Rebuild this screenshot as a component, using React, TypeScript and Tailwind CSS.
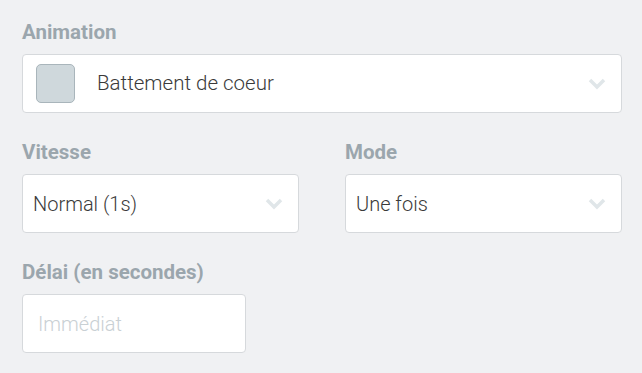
function Chevron() {
  return (
    <svg width="18" height="12" viewBox="0 0 18 12" className="shrink-0">
      <path d="M2 2 L9 9 L16 2" fill="none" stroke="#e0e6e9" strokeWidth="3.5" />
    </svg>
  );
}

function Label({ children }: { children: React.ReactNode }) {
  return (
    <div className="text-[20.5px] font-bold text-[#9ba6ad] leading-[24px] mb-[10px]">
      {children}
    </div>
  );
}

function Select({ value }: { value: string }) {
  return (
    <div className="h-[59px] bg-white border border-[#d6d9dc] rounded-[4px] flex items-center justify-between pl-[10px] pr-[15px]">
      <span className="text-[20px] font-light text-[#3a3a3a]">{value}</span>
      <Chevron />
    </div>
  );
}

export default function App() {
  return (
    <div
      className="w-[642px] h-[373px] bg-[#f0f1f3] pt-[20px] px-[22px]"
      style={{ fontFamily: 'Roboto, "Liberation Sans", sans-serif' }}
    >
      <div className="w-[600px]">
        <Label>Animation</Label>
        <div className="h-[59px] bg-white border border-[#d6d9dc] rounded-[4px] flex items-center justify-between pl-[13px] pr-[15px]">
          <div className="flex items-center gap-[22px]">
            <div className="w-[39px] h-[39px] rounded-[5px] bg-[#cfd8dc] border border-[#a9b5bb]" />
            <span className="text-[20.5px] font-light text-[#3a3a3a]">Battement de coeur</span>
          </div>
          <Chevron />
        </div>

        <div className="grid grid-cols-2 gap-[46px] mt-[27px]">
          <div>
            <Label>Vitesse</Label>
            <Select value="Normal (1s)" />
          </div>
          <div>
            <Label>Mode</Label>
            <Select value="Une fois" />
          </div>
        </div>

        <div className="mt-[27px]">
          <Label>Délai (en secondes)</Label>
          <div className="w-[224px] h-[59px] bg-white border border-[#d6d9dc] rounded-[4px] flex items-center px-[15px]">
            <span className="text-[20px] font-light text-[#c9d0d4]">Immédiat</span>
          </div>
        </div>
      </div>
    </div>
  );
}
